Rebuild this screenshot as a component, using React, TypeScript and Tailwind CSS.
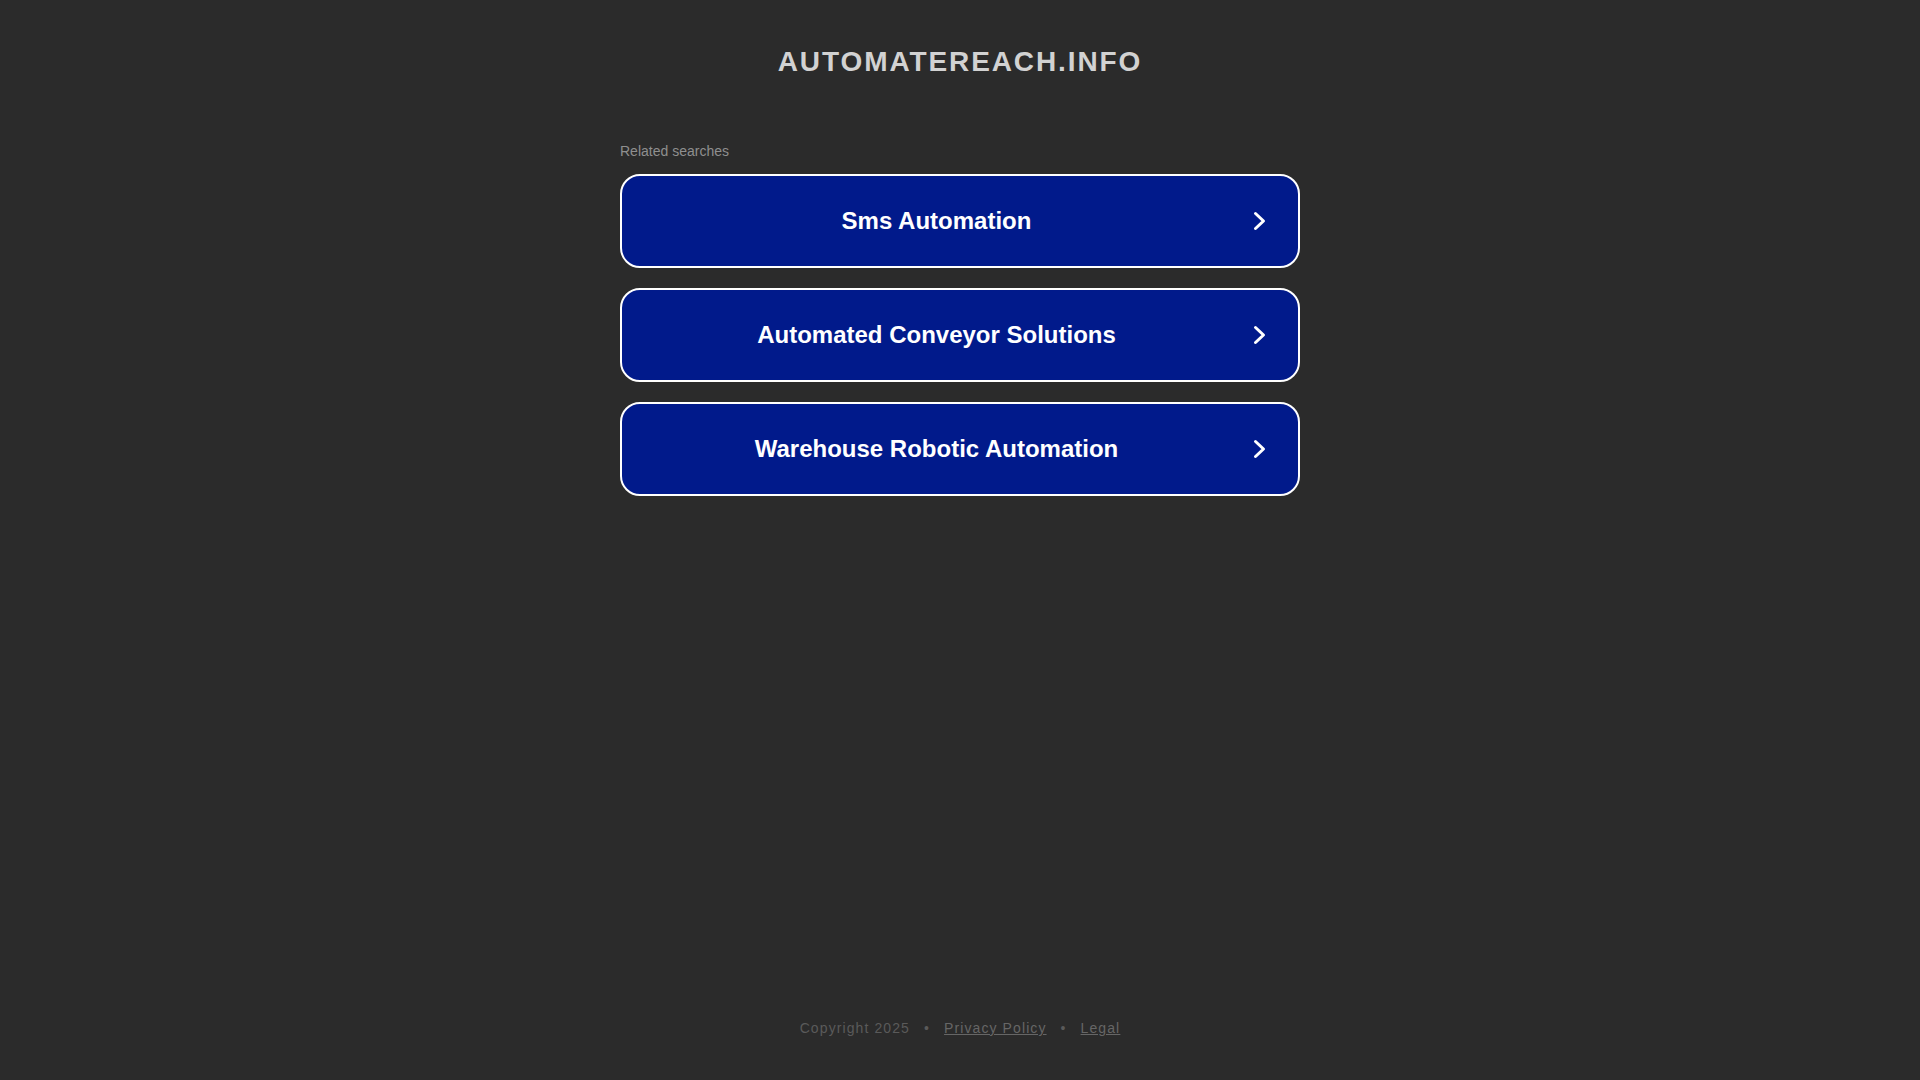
const searches = ['Sms Automation', 'Automated Conveyor Solutions', 'Warehouse Robotic Automation']

function Chevron() {
  return (
    <svg width="14" height="20" viewBox="0 0 14 20" fill="none" className="shrink-0">
      <polyline
        points="2.5,2.5 10.5,10 2.5,17.5"
        stroke="#ffffff"
        strokeWidth="3"
        strokeLinecap="round"
        strokeLinejoin="round"
      />
    </svg>
  )
}

export default function App() {
  return (
    <div
      className="min-h-screen bg-[#2b2b2b] flex flex-col"
      style={{ fontFamily: '"Liberation Sans", Arial, sans-serif' }}
    >
      <h1 className="pt-[45px] text-center text-[28px] leading-[34px] font-bold tracking-[1.9px] text-[#d2d2d2]">
        AUTOMATEREACH.INFO
      </h1>

      <div className="w-[680px] mx-auto mt-[64px]">
        <p className="text-[14px] leading-[16px] text-[#8f8f8f] mb-[15px]">Related searches</p>

        <div className="flex flex-col gap-[20px]">
          {searches.map((s) => (
            <a
              key={s}
              href="#"
              className="h-[94px] flex items-center border-2 border-white rounded-[20px] bg-[#011a8b] pr-[31px]"
            >
              <span className="flex-1 text-center text-[24px] font-bold text-white pr-[2px]">{s}</span>
              <Chevron />
            </a>
          ))}
        </div>
      </div>

      <footer className="mt-auto pb-[44px] flex justify-center gap-[14px] text-[14px] leading-[16px] tracking-[1.1px] text-[#5a5a5a]">
        <span>Copyright 2025</span>
        <span>•</span>
        <a href="#" className="underline text-[#666666]">Privacy Policy</a>
        <span>•</span>
        <a href="#" className="underline text-[#666666]">Legal</a>
      </footer>
    </div>
  )
}
